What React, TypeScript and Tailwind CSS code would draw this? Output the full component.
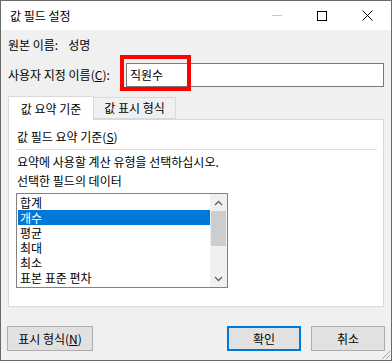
import React from 'react';

const items = ['합계', '개수', '평균', '최대', '최소', '표본 표준 편차'];

function Chevron({ down }: { down?: boolean }) {
  return (
    <svg width="9" height="6" viewBox="0 0 9 6" className="block">
      <path
        d={down ? 'M1 1 L4.5 4.5 L8 1' : 'M1 5 L4.5 1.5 L8 5'}
        fill="none"
        stroke="#606060"
        strokeWidth="1.3"
      />
    </svg>
  );
}

export default function App() {
  return (
    <div className="relative w-[392px] h-[361px] bg-[#f0f0f0] border border-[#6a6a6a] flex flex-col font-['Noto_Sans_CJK_KR',sans-serif] text-[12px] leading-[16px] text-black">
      {/* Title bar */}
      <div className="h-[29px] bg-white flex items-center">
        <span className="ml-[9px]">값 필드 설정</span>
        <div className="ml-auto flex items-center">
          <div className="w-[10px] h-px bg-[#c8c8c8] mr-[35px]" />
          <div className="w-[10px] h-[10px] border border-black mr-[35px]" />
          <svg width="11" height="11" viewBox="0 0 11 11" className="mr-[18px]">
            <path d="M0.5 0.5 L10.5 10.5 M10.5 0.5 L0.5 10.5" stroke="#000" strokeWidth="1" />
          </svg>
        </div>
      </div>

      {/* Body */}
      <div className="mt-[7px] ml-[7px] flex">
        <span>원본 이름:</span>
        <span className="ml-[10px]">성명</span>
      </div>

      <div className="mt-[10px] ml-[7px] flex items-center">
        <span>
          사용자 지정 이름(<span className="underline">C</span>):
        </span>
        <div className="ml-auto mr-[7px] w-[258px] h-[24px] bg-white border border-[#7a7a7a] flex items-center pl-[3px]">
          직원수
        </div>
      </div>

      {/* Tabs */}
      <div className="mt-[9px] ml-[7px] flex items-end h-[23px] relative z-10">
        <div className="w-[86px] h-[24px] bg-white border border-b-0 border-[#d9d9d9] flex items-center justify-center -mb-px">
          값 요약 기준
        </div>
        <div className="w-[82px] h-[22px] bg-[#f0f0f0] border border-l-0 border-[#d9d9d9] flex items-center justify-center">
          값 표시 형식
        </div>
      </div>

      {/* Panel */}
      <div className="ml-[7px] w-[376px] h-[188px] bg-white border border-[#d9d9d9] flex flex-col pl-[8px]">
        <div className="mt-[9px]">
          값 필드 요약 기준(<span className="underline">S</span>)
        </div>
        <div className="mt-[4px] w-[360px] h-px bg-[#dcdcdc]" />
        <div className="mt-[4px]">요약에 사용할 계산 유형을 선택하십시오.</div>
        <div className="mt-[3px]">선택한 필드의 데이터</div>

        <div className="mt-[4px] -ml-px w-[212px] h-[95px] border border-[#828282] flex">
          <div className="flex-1 pt-px pl-px flex flex-col">
            {items.map((it, i) => (
              <div
                key={it}
                className={
                  i === 1
                    ? 'h-[15px] leading-[15px] pl-[2px] bg-[#0078d7] text-white'
                    : 'h-[15px] leading-[15px] pl-[2px]'
                }
              >
                {it}
              </div>
            ))}
          </div>
          <div className="w-[17px] bg-[#f0f0f0] flex flex-col items-center">
            <div className="h-[17px] flex items-center justify-center">
              <Chevron />
            </div>
            <div className="w-[15px] h-[35px] bg-[#cdcdcd]" />
            <div className="flex-1" />
            <div className="h-[17px] flex items-center justify-center">
              <Chevron down />
            </div>
          </div>
        </div>
      </div>

      {/* Buttons */}
      <div className="mt-[19px] flex items-center">
        <button className="ml-[6px] w-[86px] h-[25px] bg-[#e1e1e1] border border-[#adadad] flex items-center justify-center">
          표시 형식(<span className="underline">N</span>)
        </button>
        <button className="ml-auto w-[74px] h-[25px] bg-[#e1e1e1] border-2 border-[#0078d7] flex items-center justify-center">
          확인
        </button>
        <button className="ml-[10px] mr-[6px] w-[74px] h-[25px] bg-[#e1e1e1] border border-[#adadad] flex items-center justify-center">
          취소
        </button>
      </div>

      {/* Size grip */}
      <svg width="12" height="12" viewBox="0 0 12 12" className="absolute right-0 bottom-0">
        <path d="M11 3 L3 11 M11 7 L7 11" stroke="#a0a0a0" strokeWidth="1" />
      </svg>

      {/* Red highlight around the custom name */}
      <div className="absolute left-[119px] top-[54px] w-[71px] h-[36px] border-4 border-[#ff0000]" />
    </div>
  );
}
